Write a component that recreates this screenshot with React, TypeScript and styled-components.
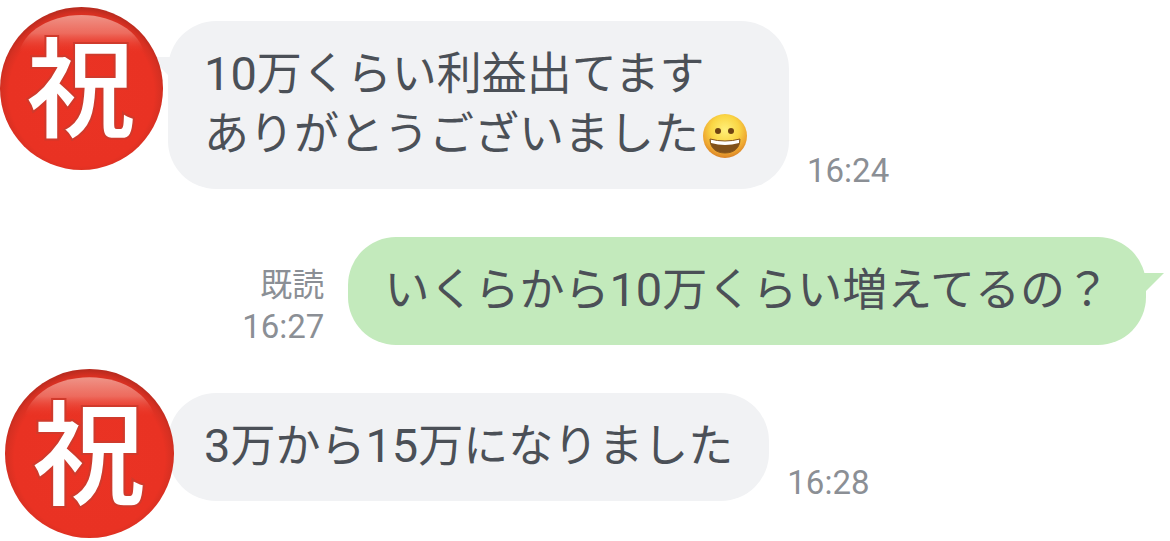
import React, { useId } from "react";
import styled, { createGlobalStyle } from "styled-components";

const GlobalStyle = createGlobalStyle`
  *, *::before, *::after { box-sizing: border-box; }
  body {
    margin: 0;
    background: #ffffff;
    font-family: Roboto, "Noto Sans CJK JP", sans-serif;
    color: #4b5057;
  }
`;

const Chat = styled.main`
  display: flex;
  flex-direction: column;
  padding-top: 7px;
`;

const Incoming = styled.article`
  display: flex;
  align-items: flex-start;
`;

const Outgoing = styled.article`
  display: flex;
  justify-content: flex-end;
  align-items: flex-end;
  gap: 24px;
  padding: 48px 24px 24px;
`;

const AvatarSlot = styled.div<{ $indent: number }>`
  position: relative;
  z-index: 1;
  flex: none;
  width: 168px;
  padding-left: ${(p) => p.$indent}px;
`;

const AvatarImage = styled.svg`
  display: block;
  overflow: visible;
`;

const Body = styled.div<{ $drop: number }>`
  display: flex;
  align-items: flex-end;
  gap: 18px;
  padding-top: ${(p) => p.$drop}px;
`;

const Bubble = styled.div<{ $own?: boolean }>`
  position: relative;
  padding: 24px 36px;
  border-radius: 48px;
  background: ${(p) => (p.$own ? "#c3eabc" : "#f1f2f4")};
`;

const Message = styled.p`
  margin: 0;
  font-size: 45px;
  line-height: 60px;
`;

const Digits = styled.span`
  font-size: 47px;
  line-height: 1;
`;

const Tail = styled.svg<{ $own?: boolean }>`
  position: absolute;
  top: 36px;
  ${(p) => (p.$own ? "right: -18px;" : "left: -18px;")}
`;

const Meta = styled.div`
  display: flex;
  flex-direction: column;
  align-items: flex-end;
  font-size: 33px;
  line-height: 36px;
  color: #8b8f95;
`;

const ReadMark = styled.span`
  font-size: 32px;
  line-height: 48px;
`;

const Emoji = styled.svg`
  display: inline-block;
  vertical-align: -9px;
  margin: 0 5px 0 4px;
`;

function Avatar({ size }: { size: number }) {
  const id = useId().replace(/[^a-zA-Z0-9]/g, "");
  return (
    <AvatarImage width={size} height={size} viewBox="0 0 164 164" role="img" aria-label="祝">
      <defs>
        <radialGradient id={`${id}b`} cx="50%" cy="53%" r="53%">
          <stop offset="0" stopColor="#ea3324" />
          <stop offset="0.84" stopColor="#e93223" />
          <stop offset="0.93" stopColor="#d63022" />
          <stop offset="1" stopColor="#b52a1e" />
        </radialGradient>
        <linearGradient id={`${id}g`} x1="0" y1="0" x2="0" y2="1">
          <stop offset="0" stopColor="#ef9488" />
          <stop offset="0.2" stopColor="#ee7568" stopOpacity="0.85" />
          <stop offset="0.42" stopColor="#ea3324" stopOpacity="0" />
        </linearGradient>
      </defs>
      <circle cx="82" cy="82" r="82" fill={`url(#${id}b)`} />
      <ellipse cx="82" cy="54" rx="64" ry="46" fill={`url(#${id}g)`} />
      <text
        x="81"
        y="123"
        textAnchor="middle"
        fontFamily='"Noto Sans CJK JP", sans-serif'
        fontWeight="700"
        fontSize="110"
        fill="#ffffff"
        stroke="#d03a2c"
        strokeWidth="2"
      >
        祝
      </text>
    </AvatarImage>
  );
}

function GrinningFace() {
  return (
    <Emoji width="45" height="45" viewBox="0 0 45 45" role="img" aria-label="😀">
      <defs>
        <radialGradient id="face" cx="50%" cy="36%" r="64%">
          <stop offset="0" stopColor="#fff07a" />
          <stop offset="0.5" stopColor="#fad644" />
          <stop offset="0.82" stopColor="#eda430" />
          <stop offset="1" stopColor="#d98228" />
        </radialGradient>
        <clipPath id="mouth">
          <path d="M7 25 Q22 29 37 25 C37 34 31 39 22 39 C13 39 7 34 7 25Z" />
        </clipPath>
      </defs>
      <circle cx="22" cy="22" r="22" fill="url(#face)" />
      <ellipse cx="15" cy="17" rx="3" ry="3" fill="#6f4312" />
      <ellipse cx="28" cy="17" rx="3" ry="3" fill="#6f4312" />
      <g clipPath="url(#mouth)">
        <rect x="6" y="23" width="33" height="17" fill="#80511b" />
        <path d="M7 23 H37 L36 29 Q22 33 8 29Z" fill="#ffffff" />
      </g>
      <path
        d="M7 25 Q22 29 37 25 C37 34 31 39 22 39 C13 39 7 34 7 25Z"
        fill="none"
        stroke="#8a581d"
        strokeWidth="1"
      />
    </Emoji>
  );
}

export default function App() {
  return (
    <>
      <GlobalStyle />
      <Chat>
        <Incoming>
          <AvatarSlot $indent={0}>
            <Avatar size={163} />
          </AvatarSlot>
          <Body $drop={14}>
            <Bubble>
              <Tail width="30" height="18" viewBox="0 0 30 18" aria-hidden="true">
                <path d="M0 0 H30 V18 H18Z" fill="#f1f2f4" />
              </Tail>
              <Message>
                <Digits>10</Digits>万くらい利益出てます
                <br />
                ありがとうございました
                <GrinningFace />
              </Message>
            </Bubble>
            <Meta>
              <time>16:24</time>
            </Meta>
          </Body>
        </Incoming>

        <Outgoing>
          <Meta>
            <ReadMark>既読</ReadMark>
            <time>16:27</time>
          </Meta>
          <Bubble $own>
            <Tail $own width="30" height="18" viewBox="0 0 30 18" aria-hidden="true">
              <path d="M30 0 H0 V18 H12Z" fill="#c3eabc" />
            </Tail>
            <Message>
              いくらから<Digits>10</Digits>万くらい増えてるの？
            </Message>
          </Bubble>
        </Outgoing>

        <Incoming>
          <AvatarSlot $indent={5}>
            <Avatar size={169} />
          </AvatarSlot>
          <Body $drop={24}>
            <Bubble>
              <Message>
                <Digits>3</Digits>万から<Digits>15</Digits>万になりました
              </Message>
            </Bubble>
            <Meta>
              <time>16:28</time>
            </Meta>
          </Body>
        </Incoming>
      </Chat>
    </>
  );
}
